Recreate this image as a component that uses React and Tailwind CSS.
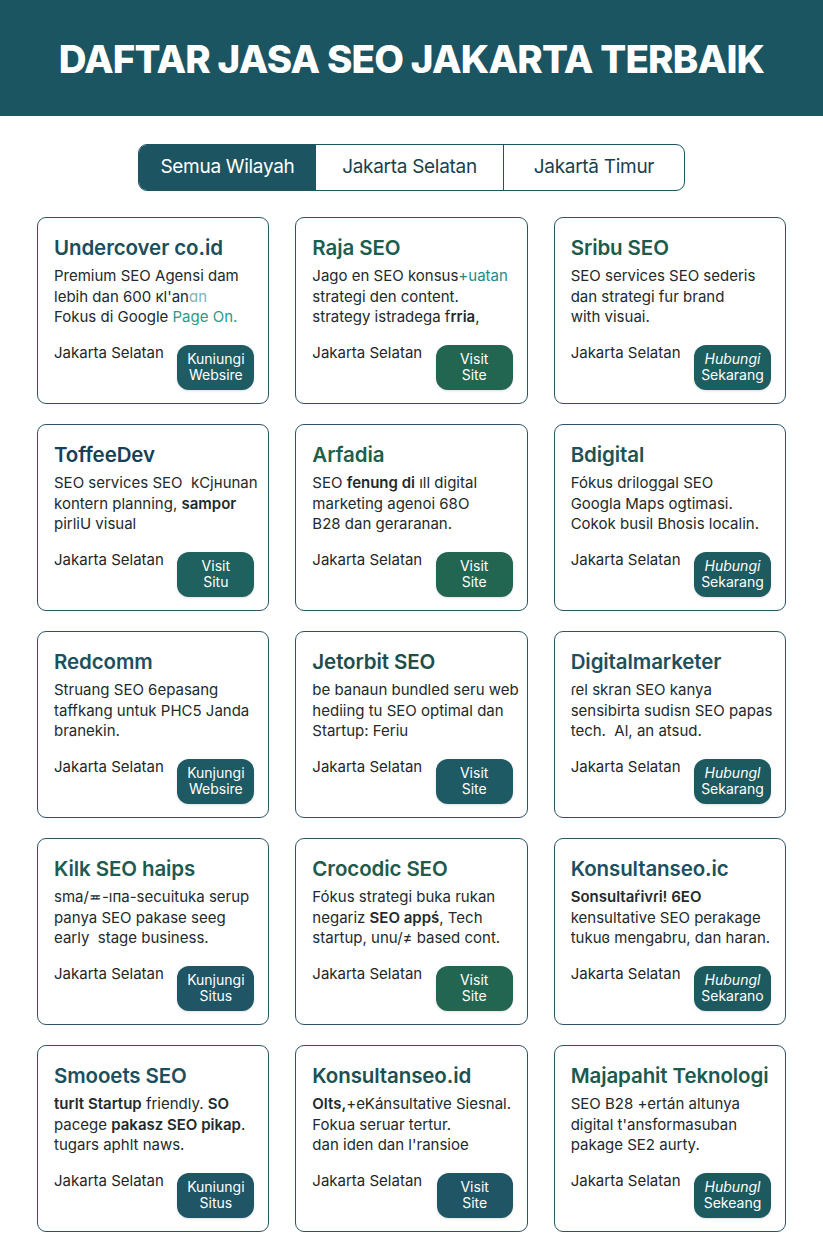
import React from "react";

const TEAL = "bg-[#1e5a63]";
const GREEN = "bg-[#226652]";

const cards = [
  {
    title: "Undercover co.id",
    tc: "text-[#1b4d5c]",
    lines: [
      <>Premium SEO Agensi dam</>,
      <>lebih dan 600 кl'an<span className="text-[#7fb3b8]">ɑn</span></>,
      <>Fokus di Google <span className="text-[#2b9a88]">Page On.</span></>,
    ],
    btn: [<>Kuniungi</>, <>Websire</>],
    bc: "bg-[#1f5b63]",
  },
  {
    title: "Raja SEO",
    tc: "text-[#1c5e4e]",
    lines: [
      <>Jago en SEO konsus<span className="text-[#1f8a86]">+uatan</span></>,
      <>strategi den content.</>,
      <>strategy istradega f<span className="font-semibold">rria</span>,</>,
    ],
    btn: [<>Visit</>, <>Site</>],
    bc: GREEN,
  },
  {
    title: "Sribu SEO",
    tc: "text-[#1c5a4c]",
    lines: [<>SEO services SEO sederis</>, <>dan strategi fur brand</>, <>with visuai.</>],
    btn: [<span className="italic">Hubungi</span>, <>Sekarang</>],
    bc: "bg-[#1d5e61]",
  },
  {
    title: "ToffeeDev",
    tc: "text-[#183f55]",
    lines: [
      <>SEO services SEO &nbsp;kCjнunan</>,
      <>kontern planning, <span className="font-semibold">sampor</span></>,
      <>pirliU visual</>,
    ],
    btn: [<>Visit</>, <>Situ</>],
    bc: "bg-[#1f615e]",
  },
  {
    title: "Arfadia",
    tc: "text-[#1f5e4b]",
    lines: [
      <>SEO <span className="font-semibold">fenung di</span> ıll digital</>,
      <>marketing agenoi 68O</>,
      <>B28 dan geraranan.</>,
    ],
    btn: [<>Visit</>, <>Site</>],
    bc: GREEN,
  },
  {
    title: "Bdigital",
    tc: "text-[#1d5352]",
    lines: [<>Fókus driloggal SEO</>, <>Googla Maps ogtimasi.</>, <>Cokok busil Bhosis localin.</>],
    btn: [<span className="italic">Hubungi</span>, <>Sekarang</>],
    bc: "bg-[#1e5b60]",
  },
  {
    title: "Redcomm",
    tc: "text-[#1d4f60]",
    lines: [<>Struang SEO 6epasang</>, <>taffkang untuk PHC5 Janda</>, <>branekin.</>],
    btn: [<>Kunjungi</>, <>Websire</>],
    bc: TEAL,
  },
  {
    title: "Jetorbit SEO",
    tc: "text-[#1d4e4a]",
    lines: [<>be banaun bundled seru web</>, <>hediing tu SEO optimal dan</>, <>Startup: Feriu</>],
    btn: [<>Visit</>, <>Site</>],
    bc: TEAL,
  },
  {
    title: "Digitalmarketer",
    tc: "text-[#1c505c]",
    lines: [<>ɾel skran SEO kanya</>, <>sensibirta sudisn SEO papas</>, <>tech. &nbsp;Al, an atsud.</>],
    btn: [<span className="italic">Hubungl</span>, <>Sekarang</>],
    bc: "bg-[#1d5a60]",
  },
  {
    title: "Kilk SEO haips",
    tc: "text-[#1d5a52]",
    lines: [<>sma/≖-ıпa-secuituka serup</>, <>panya SEO pakase seeg</>, <>early &nbsp;stage business.</>],
    btn: [<>Kunjungi</>, <>Situs</>],
    bc: "bg-[#1f5565]",
  },
  {
    title: "Crocodic SEO",
    tc: "text-[#1f5a4a]",
    lines: [
      <>Fókus strategi buka rukan</>,
      <>negariz <span className="font-semibold">SEO appś</span>, Tech</>,
      <>startup, unu/≠ based cont.</>,
    ],
    btn: [<>Visit</>, <>Site</>],
    bc: GREEN,
  },
  {
    title: "Konsultanseo.ic",
    tc: "text-[#1c5060]",
    lines: [
      <span className="font-semibold">Sonsultaŕivɾi! 6EO</span>,
      <>kensultative SEO perakage</>,
      <>tukuɞ mengabru, dan haran.</>,
    ],
    btn: [<span className="italic">Hubungl</span>, <>Sekarano</>],
    bc: "bg-[#1d5a60]",
  },
  {
    title: "Smooets SEO",
    tc: "text-[#1c4f5e]",
    lines: [
      <><span className="font-semibold">turlt Startup</span> friendly. <span className="font-semibold">SO</span></>,
      <>pacege <span className="font-semibold">pakasz SEO pikap</span>.</>,
      <>tugars aphlt naws.</>,
    ],
    btn: [<>Kuniungi</>, <>Situs</>],
    bc: "bg-[#1f5565]",
  },
  {
    title: "Konsultanseo.id",
    tc: "text-[#1c5052]",
    lines: [
      <><span className="font-semibold">Olts,</span>+eKánsultative Siesnal.</>,
      <>Fokua seruar tertur.</>,
      <>dan iden dan l'ransioe</>,
    ],
    btn: [<>Visit</>, <>Site</>],
    bc: "bg-[#1f5565]",
    wide: true,
  },
  {
    title: "Majapahit Teknologi",
    tc: "text-[#1c5a4c]",
    lines: [<>SEO B28 +ertán altunya</>, <>digital t'ansformasuban</>, <>pakage SE2 aurty.</>],
    btn: [<span className="italic">Hubungl</span>, <>Sekeang</>],
    bc: "bg-[#1d5a60]",
  },
];

function Card({ c }) {
  return (
    <div className="h-[187px] rounded-[9px] border-[1.5px] border-[#2d5566] bg-white pl-[16px] pr-[14px] pt-[16px] flex flex-col">
      <h2 className={`text-[20.5px] leading-[28px] font-semibold tracking-[-0.1px] whitespace-nowrap ${c.tc}`}>
        {c.title}
      </h2>
      <div className="mt-[4px] text-[15px] leading-[20.5px] text-[#222a2c] whitespace-nowrap">
        {c.lines.map((l, i) => (
          <div key={i}>{l}</div>
        ))}
      </div>
      <div className="mt-[15px] flex items-start justify-between">
        <span className="text-[15px] leading-[20px] text-[#1f2527] whitespace-nowrap">Jakarta Selatan</span>
        <div
          className={`${c.bc} ${c.wide ? "w-[76px]" : "w-[77px]"} h-[45px] rounded-[12px] mt-[2px] flex flex-col items-center justify-center text-white text-[14px] leading-[16px] shadow-sm`}
        >
          <span>{c.btn[0]}</span>
          <span>{c.btn[1]}</span>
        </div>
      </div>
    </div>
  );
}

export default function App() {
  return (
    <div className="min-h-[1234px] bg-white" style={{ fontFamily: "Inter, 'Noto Sans', sans-serif" }}>
      <header className="h-[116px] bg-[#1b5562] flex items-center justify-center">
        <h1 className="text-white text-[38.5px] font-extrabold tracking-[-0.8px] leading-none pt-[3px]">
          DAFTAR JASA SEO JAKARTA TERBAIK
        </h1>
      </header>
      <div className="flex justify-center mt-[28px]">
        <div className="flex h-[47px] rounded-[9px] border-[1.5px] border-[#1c5461] overflow-hidden text-[19px] tracking-[-0.3px]">
          <div className="w-[177px] bg-[#1c5461] text-white flex items-center justify-center">Semua Wilayah</div>
          <div className="w-[188px] border-r-[1.5px] border-[#1c5461] text-[#1b3f4c] flex items-center justify-center">
            Jakarta Selatan
          </div>
          <div className="w-[180px] text-[#1b3f4c] flex items-center justify-center">Jakartā Timur</div>
        </div>
      </div>
      <div className="grid grid-cols-3 gap-x-[26px] gap-y-[20px] px-[37px] mt-[26px]">
        {cards.map((c, i) => (
          <Card key={i} c={c} />
        ))}
      </div>
    </div>
  );
}
